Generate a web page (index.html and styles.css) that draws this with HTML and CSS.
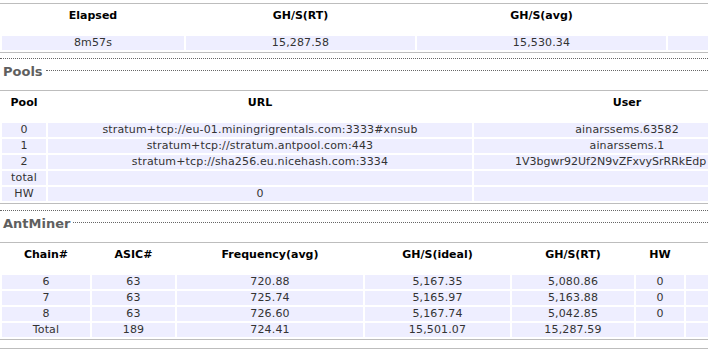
FILE: index.html
```html
<!DOCTYPE html>
<html>
<head>
<meta charset="utf-8">
<title>AntMiner Status</title>
<link rel="stylesheet" href="styles.css">
</head>
<body>
<div class="page">
  <div class="node">
    <table class="tbl tbl-summary">
      <colgroup><col class="c-elapsed"><col class="c-rt"><col class="c-avg"><col class="c-more"></colgroup>
      <thead><tr><th>Elapsed</th><th>GH/S(RT)</th><th>GH/S(avg)</th><th></th></tr></thead>
      <tbody><tr><td>8m57s</td><td>15,287.58</td><td>15,530.34</td><td></td></tr></tbody>
    </table>
  </div>

  <section class="sec">
    <div class="sec-head"><span class="legend">Pools</span><span class="rule"></span></div>
    <div class="node">
      <table class="tbl tbl-pools">
        <colgroup><col class="c-pool"><col class="c-url"><col class="c-user"></colgroup>
        <thead><tr><th>Pool</th><th>URL</th><th>User</th></tr></thead>
        <tbody>
          <tr><td>0</td><td>stratum+tcp://eu-01.miningrigrentals.com:3333#xnsub</td><td>ainarssems.63582</td></tr>
          <tr><td>1</td><td>stratum+tcp://stratum.antpool.com:443</td><td>ainarssems.1</td></tr>
          <tr><td>2</td><td>stratum+tcp://sha256.eu.nicehash.com:3334</td><td class="left">1V3bgwr92Uf2N9vZFxvySrRRkEdp</td></tr>
          <tr><td>total</td><td></td><td></td></tr>
          <tr><td>HW</td><td>0</td><td></td></tr>
        </tbody>
      </table>
    </div>
  </section>

  <section class="sec sec-miner">
    <div class="sec-head"><span class="legend">AntMiner</span><span class="rule"></span></div>
    <div class="node">
      <table class="tbl tbl-miner">
        <colgroup><col class="c-chain"><col class="c-asic"><col class="c-freq"><col class="c-ideal"><col class="c-rt2"><col class="c-hw"><col class="c-more2"></colgroup>
        <thead><tr><th>Chain#</th><th>ASIC#</th><th>Frequency(avg)</th><th>GH/S(ideal)</th><th>GH/S(RT)</th><th>HW</th><th></th></tr></thead>
        <tbody>
          <tr><td>6</td><td>63</td><td>720.88</td><td>5,167.35</td><td>5,080.86</td><td>0</td><td></td></tr>
          <tr><td>7</td><td>63</td><td>725.74</td><td>5,165.97</td><td>5,163.88</td><td>0</td><td></td></tr>
          <tr><td>8</td><td>63</td><td>726.60</td><td>5,167.74</td><td>5,042.85</td><td>0</td><td></td></tr>
          <tr><td>Total</td><td>189</td><td>724.41</td><td>15,501.07</td><td>15,287.59</td><td></td><td></td></tr>
        </tbody>
      </table>
    </div>
    <div class="node-next"></div>
  </section>
</div>
</body>
</html>
```

FILE: styles.css
```css
html, body {
  margin: 0;
  padding: 0;
  overflow: hidden;
  background: #ffffff;
}

body {
  width: 708px;
  height: 350px;
  font-family: "DejaVu Sans", Verdana, sans-serif;
  font-size: 11px;
  line-height: 14px;
  color: #333333;
}

.page {
  padding-top: 3px;
}

.node {
  border-top: 1px solid #bdbdbd;
  border-bottom: 1px solid #bdbdbd;
}

.tbl {
  border-collapse: separate;
  border-spacing: 2px;
  table-layout: fixed;
}

.tbl th {
  font-weight: bold;
  color: #000000;
  text-align: center;
  padding: 3px 0 11px;
  height: 14px;
  white-space: nowrap;
}

.tbl td {
  background: #eeeeff;
  height: 14px;
  padding: 0;
  text-align: center;
  white-space: nowrap;
  overflow: hidden;
  letter-spacing: 0.15px;
}

.tbl td.left {
  text-align: left;
  padding-left: 41px;
  letter-spacing: 0;
}

.tbl-summary { width: 770px; }
.c-elapsed { width: 182px; }
.c-rt { width: 229px; }
.c-avg { width: 249px; }
.c-more { width: 100px; }

.tbl-pools { width: 782px; }
.c-pool { width: 44px; }
.c-url { width: 424px; }
.c-user { width: 306px; }

.tbl-miner { width: 768px; }
.c-chain { width: 88px; }
.c-asic { width: 83px; }
.c-freq { width: 186px; }
.c-ideal { width: 145px; }
.c-rt2 { width: 122px; }
.c-hw { width: 48px; }
.c-more2 { width: 80px; }

.sec {
  margin-top: 5px;
}

.sec-miner {
  margin-top: 6px;
}

.sec-head {
  display: flex;
  align-items: flex-start;
  border-top: 1px dotted #666666;
  padding: 5px 0 10px 3px;
}

.legend {
  font-size: 13px;
  line-height: 16px;
  font-weight: bold;
  color: #5f5f5f;
}

.rule {
  flex: 1;
  margin: 6px 0 0 3px;
  border-top: 1px dotted #666666;
}

.node-next {
  margin-top: 8px;
  border-top: 1px solid #bdbdbd;
}
```
